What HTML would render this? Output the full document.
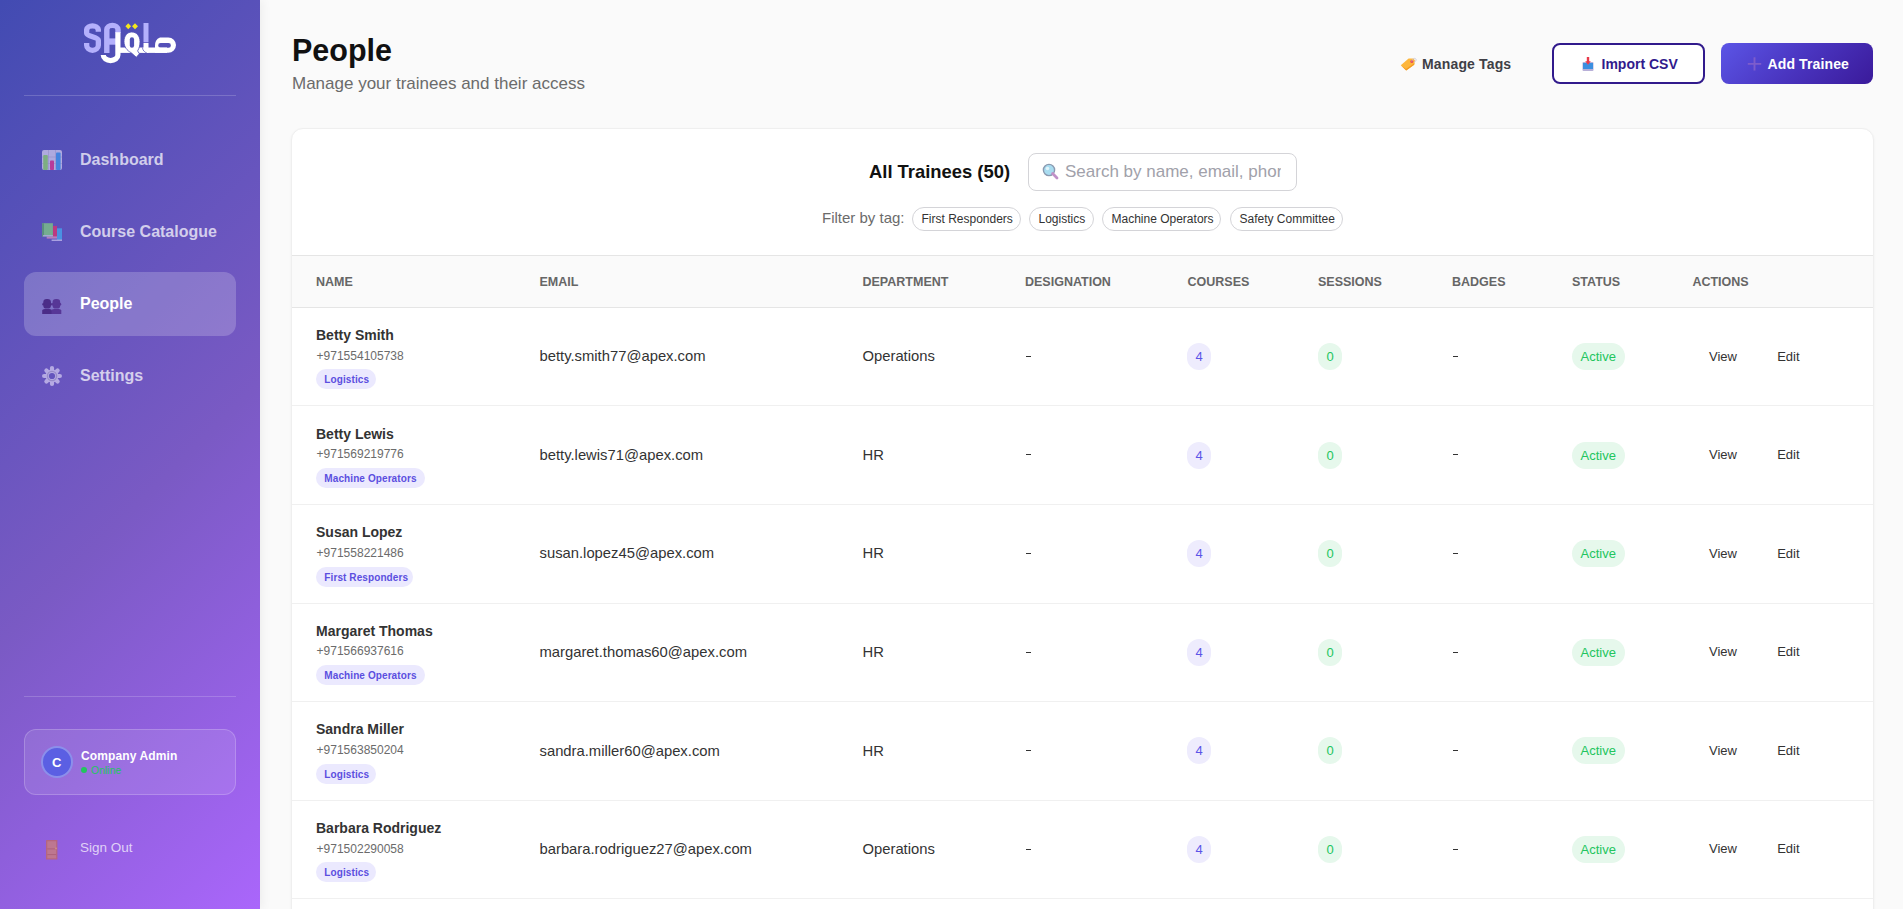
<!DOCTYPE html>
<html><head><meta charset="utf-8"><title>People</title>
<style>
html,body{margin:0;padding:0;}
body{width:1903px;height:909px;overflow:hidden;position:relative;background:#fafafa;font-family:"Liberation Sans",sans-serif;}
.t{position:absolute;white-space:nowrap;}
.r{position:absolute;box-sizing:border-box;}
svg{position:absolute;overflow:visible;}
</style></head><body>
<div class="r" style="left:0;top:0;width:260px;height:909px;background:linear-gradient(135deg,#424bb2 0%,#7a5ac4 55%,#aa66fb 100%);box-shadow:2px 0 10px rgba(0,0,0,0.06);z-index:2"></div>
<div id="sb" style="position:absolute;left:0;top:0;width:260px;height:909px;z-index:3">
<svg style="left:0;top:0" width="260" height="80" viewBox="0 0 260 80">
<path d="M98.3 31.8 V29.6 A5.85 4.15 0 0 0 86.65 29.6 V33.2 C86.65 36.6 98.35 36.9 98.35 40.3 V45.2 A5.85 5.1 0 0 1 86.65 45.2 V43" fill="none" stroke="#b4b0fc" stroke-width="5.3"/>
<path d="M106.8 52.9 V29.6 A5.6 4.2 0 0 1 118 29.6 V33" fill="none" stroke="#b4b0fc" stroke-width="5.4"/>
<rect x="106" y="38.4" width="12" height="6.3" fill="#b4b0fc"/>
<path d="M117.9 32.3 V55 A7.2 5.5 0 0 1 103.3 55" fill="none" stroke="#fff" stroke-width="5.2"/>
<rect x="117" y="47.5" width="50" height="5.4" fill="#fff"/>
<path d="M131.8 32 C136.6 32 140 36 140 41.5 C140 45.2 139.3 48.2 137.6 50.9 L139.4 53.8 L136.3 57.3 L131 52.6 C127 50.6 124 46.8 124 41.5 C124 36 127.2 32 131.8 32 Z" fill="#fff" stroke="#4f4fb5" stroke-width="0.8"/>
<path d="M129.8 39.4 V45.5 A2.15 2.2 0 0 0 134.1 45.5 V39.4 A2.15 2.2 0 0 0 129.8 39.4 Z" fill="#4f50b6"/>
<rect x="143.5" y="23" width="5" height="19.3" fill="#b4b0fc"/>
<rect x="143.5" y="43" width="5" height="9.9" fill="#fff"/>
<path d="M142.4 47.5 C142.8 50.3 144.2 52.2 146.8 52.9" fill="none" stroke="#4f4fb5" stroke-width="0.7"/>
<path d="M160 37.4 H168.3 A7.7 7.7 0 0 1 168.3 52.8 H155 V46 A7.7 8.6 0 0 1 160 37.4 Z M160.6 43 H168.5 A2.4 2.4 0 0 1 168.5 47.8 H160.6 A2.4 2.4 0 0 1 160.6 43 Z" fill="#fff" fill-rule="evenodd"/>
<path d="M128.25 23.2 L131.1 26.15 L128.25 29.2 L125.4 26.15 Z M135 23.2 L138 26.15 L135 29.2 L132 26.15 Z" fill="#f3e61c"/>
</svg>
<div class="r" style="left:24px;top:95px;width:212px;height:1px;background:rgba(255,255,255,0.18)"></div>
<div class="t " style="left:80px;top:149.96px;font-size:16px;line-height:20.0px;color:rgba(255,255,255,0.72);font-weight:700;">Dashboard</div>
<div class="t " style="left:80px;top:221.96px;font-size:16px;line-height:20.0px;color:rgba(255,255,255,0.72);font-weight:700;">Course Catalogue</div>
<div class="r" style="left:24px;top:272px;width:212px;height:64px;background:rgba(255,255,255,0.2);border-radius:12px"></div>
<div class="t " style="left:80px;top:293.96px;font-size:16px;line-height:20.0px;color:#ffffff;font-weight:700;">People</div>
<div class="t " style="left:80px;top:365.96px;font-size:16px;line-height:20.0px;color:rgba(255,255,255,0.72);font-weight:700;">Settings</div>
<svg style="left:42px;top:150px;opacity:0.7" width="20" height="20" viewBox="0 0 20 20">
<rect x="0" y="0" width="20" height="20" rx="2" fill="#d6d0f0"/>
<path d="M6.5 0 V20 M13.5 0 V20 M0 7 H20 M0 13.5 H20" stroke="#b0a8d0" stroke-width="0.6"/>
<rect x="1.2" y="5" width="4.6" height="15" rx="1" fill="#8fd66c"/>
<rect x="8" y="10.5" width="4" height="9.5" rx="0.8" fill="#e0338f"/>
<rect x="14" y="2.5" width="4.6" height="17.5" rx="1" fill="#3f9af0"/>
</svg>
<svg style="left:42px;top:222px;opacity:0.72" width="20" height="20" viewBox="0 0 20 20">
<rect x="15" y="6.3" width="5" height="12.5" fill="#44aaf2"/><rect x="9.6" y="17.5" width="10.4" height="1.5" fill="#c8c0f0"/>
<rect x="10.9" y="3.9" width="4.1" height="11.4" fill="#e0306c"/><rect x="4.7" y="14.4" width="10.3" height="2.2" fill="#d890c0"/>
<rect x="0.1" y="1.2" width="10.8" height="13.2" fill="#80d080"/><rect x="0.1" y="1.2" width="1.9" height="13.2" fill="#5aa66a"/><rect x="1" y="13.2" width="9.9" height="1.2" fill="#d0c8f0"/>
</svg>
<svg style="left:42px;top:298px" width="20" height="17" viewBox="0 0 20 17">
<g fill="#4b2d88">
<rect x="1.3" y="1" width="7.6" height="9.6" rx="3.4" ry="3.2"/><ellipse cx="1.2" cy="6.2" rx="0.9" ry="1.2"/><ellipse cx="9" cy="6.2" rx="0.9" ry="1.2"/>
<path d="M0.2 12.6 Q0.2 11 2.8 10.9 H7.4 Q10 11 10 12.6 V15.9 H0.2 Z"/>
</g>
<g fill="#573797">
<rect x="10.6" y="1" width="7.6" height="9.6" rx="3.4" ry="3.2"/><ellipse cx="10.5" cy="6.2" rx="0.9" ry="1.2"/><ellipse cx="18.3" cy="6.2" rx="0.9" ry="1.2"/>
<path d="M9.5 12.6 Q9.5 11 12.1 10.9 H16.7 Q19.3 11 19.3 12.6 V15.9 H9.5 Z"/>
</g>
</svg>
<svg style="left:42px;top:366px;opacity:0.72" width="20" height="20" viewBox="0 0 20 20">
<g stroke="#d4ccf2" stroke-width="4.2" stroke-linecap="round">
<path d="M10 2.1 V17.9 M2.1 10 H17.9 M4.4 4.4 L15.6 15.6 M15.6 4.4 L4.4 15.6"/></g>
<circle cx="10" cy="10" r="6.4" fill="#d4ccf2"/>
<circle cx="10" cy="10" r="4.6" fill="none" stroke="#aaa0cc" stroke-width="1.3"/>
<circle cx="10" cy="10" r="3.1" fill="#6456bd"/>
</svg>
<div class="r" style="left:24px;top:696px;width:212px;height:1px;background:rgba(255,255,255,0.18)"></div>
<div class="r" style="left:24px;top:729px;width:212px;height:66px;background:rgba(255,255,255,0.1);border:1px solid rgba(255,255,255,0.2);border-radius:12px"></div>
<div class="r" style="left:40.5px;top:746px;width:32px;height:32px;background:#5b5fe3;border:2px solid rgba(255,255,255,0.3);border-radius:50%"></div>
<div class="t " style="left:52.0px;top:754.67px;font-size:13px;line-height:16.25px;color:#fff;font-weight:700;">C</div>
<div class="t " style="left:81px;top:749.14px;font-size:12px;line-height:15.0px;color:#fff;font-weight:700;letter-spacing:0.12px;">Company Admin</div>
<div class="r" style="left:81px;top:767px;width:6px;height:6px;background:#22c55e;border-radius:50%"></div>
<div class="t " style="left:91px;top:764.30px;font-size:10.5px;line-height:13.12px;color:#22c55e;">Online</div>
<svg style="left:46.4px;top:840.3px;opacity:0.62" width="12" height="20" viewBox="0 0 12 20">
<rect x="0" y="0" width="11.4" height="19.5" rx="0.6" fill="#cc6a44"/>
<rect x="1.3" y="1.3" width="8.8" height="17" fill="#d98660"/>
<path d="M1.3 8.9 H10.1 M1.3 14.6 H10.1" stroke="#bb5e3c" stroke-width="0.9"/>
<circle cx="10" cy="8.4" r="0.9" fill="#f5b640"/>
</svg>
<div class="t " style="left:80px;top:840.28px;font-size:13.5px;line-height:16.88px;color:rgba(255,255,255,0.72);">Sign Out</div>
</div>
<div class="t " style="left:292px;top:31.07px;font-size:30.5px;line-height:38.12px;color:#111111;font-weight:700;">People</div>
<div class="t " style="left:292px;top:73.08px;font-size:17px;line-height:21.25px;color:#6b6b6b;">Manage your trainees and their access</div>
<svg style="left:1400px;top:57px" width="17" height="14" viewBox="0 0 17 14">
<path d="M0.8 8.2 L8.6 1.6 L13.4 1.6 L15 3.4 L14.2 7.8 L6.2 13.6 Z" fill="#fdb63c"/>
<path d="M0.8 8.2 L6.2 13.6 L14.2 7.8 L14.5 6 L6 12 Z" fill="#f39a24"/>
<circle cx="11.8" cy="4.4" r="1.5" fill="#e84a5a"/>
<path d="M11.8 4.4 C12.5 1.5 15 0.5 16 2.2 C16.6 3.3 15.5 4.8 14 5" fill="none" stroke="#c4c2d8" stroke-width="0.8"/>
</svg>
<div class="t " style="left:1422px;top:56.10px;font-size:14px;line-height:17.5px;color:#3f3f46;font-weight:700;letter-spacing:0.15px;">Manage Tags</div>
<div class="r" style="left:1552px;top:43px;width:153px;height:41px;border:2px solid #311a8c;border-radius:8px;background:#fff"></div>
<svg style="left:1581.5px;top:57px" width="13" height="14" viewBox="0 0 13 14">
<rect x="0.5" y="5" width="11" height="9" rx="1" fill="#b8b0d8"/>
<path d="M1 6 H5 L6 7.5 L7 6 H11 V12 H1 Z" fill="#3b8fe0"/>
<rect x="4.8" y="0" width="2.4" height="5" fill="#e83a4a"/>
<path d="M3.2 4.2 H8.8 L6 7.8 Z" fill="#e83a4a"/>
</svg>
<div class="t " style="left:1601.5px;top:56.00px;font-size:14px;line-height:17.5px;color:#311a8c;font-weight:700;">Import CSV</div>
<div class="r" style="left:1721px;top:43px;width:152px;height:41px;border-radius:8px;background:linear-gradient(135deg,#5b55e6 0%,#4a35c0 50%,#3a1a9a 100%)"></div>
<svg style="left:1747px;top:56px" width="15" height="15" viewBox="0 0 15 15">
<path d="M7.5 1.2 V14.6 M0.8 7.9 H14.2" stroke="#7d5ccc" stroke-width="1.9"/>
</svg>
<div class="t " style="left:1767.5px;top:56.00px;font-size:14px;line-height:17.5px;color:#ffffff;font-weight:700;letter-spacing:0.12px;">Add Trainee</div>
<div class="r" style="left:291px;top:128px;width:1583px;height:800px;background:#fff;border:1px solid #efefef;border-radius:12px;box-shadow:0 1px 3px rgba(0,0,0,0.05)"></div>
<div class="t " style="left:869px;top:159.52px;font-size:18.4px;line-height:23.0px;color:#111111;font-weight:700;">All Trainees (50)</div>
<div class="r" style="left:1028px;top:153px;width:269px;height:38px;border:1px solid #d4d4d8;border-radius:8px;background:#fff"></div>
<svg style="left:1042px;top:163px" width="18" height="18" viewBox="0 0 18 18">
<circle cx="7" cy="7" r="5.6" fill="#a8dcf0" stroke="#8a9ab0" stroke-width="1.4"/>
<circle cx="5.5" cy="5.5" r="1.8" fill="#e0f4fb"/>
<path d="M10.6 10.6 L15 15" stroke="#c090c8" stroke-width="2.8" stroke-linecap="round"/>
</svg>
<div style="position:absolute;left:1065px;top:156px;width:216px;height:32px;overflow:hidden"><div class="t " style="left:0px;top:5.38px;font-size:17px;line-height:21.25px;color:#a1a1aa;">Search by name, email, phone</div>
</div>
<div class="t " style="left:822px;top:208.73px;font-size:15px;line-height:18.75px;color:#6b6b6b;">Filter by tag:</div>
<div class="r" style="left:912px;top:207px;width:109px;height:24px;border:1px solid #d4d4d8;border-radius:12px;background:#fff"></div>
<div class="t " style="left:921.5px;top:212.14px;font-size:12px;line-height:15.0px;color:#333333;">First Responders</div>
<div class="r" style="left:1029px;top:207px;width:65px;height:24px;border:1px solid #d4d4d8;border-radius:12px;background:#fff"></div>
<div class="t " style="left:1038.5px;top:212.14px;font-size:12px;line-height:15.0px;color:#333333;">Logistics</div>
<div class="r" style="left:1102px;top:207px;width:119px;height:24px;border:1px solid #d4d4d8;border-radius:12px;background:#fff"></div>
<div class="t " style="left:1111.5px;top:212.14px;font-size:12px;line-height:15.0px;color:#333333;">Machine Operators</div>
<div class="r" style="left:1230px;top:207px;width:113px;height:24px;border:1px solid #d4d4d8;border-radius:12px;background:#fff"></div>
<div class="t " style="left:1239.5px;top:212.14px;font-size:12px;line-height:15.0px;color:#333333;">Safety Committee</div>
<div class="r" style="left:292px;top:255px;width:1581px;height:53px;background:#fafafa;border-top:1px solid #e5e5e5;border-bottom:1px solid #e5e5e5"></div>
<div class="t " style="left:316px;top:274.66px;font-size:12.5px;line-height:15.62px;color:#666666;font-weight:700;letter-spacing:0px;">NAME</div>
<div class="t " style="left:539.5px;top:274.66px;font-size:12.5px;line-height:15.62px;color:#666666;font-weight:700;letter-spacing:0px;">EMAIL</div>
<div class="t " style="left:862.5px;top:274.66px;font-size:12.5px;line-height:15.62px;color:#666666;font-weight:700;letter-spacing:0px;">DEPARTMENT</div>
<div class="t " style="left:1025px;top:274.66px;font-size:12.5px;line-height:15.62px;color:#666666;font-weight:700;letter-spacing:0px;">DESIGNATION</div>
<div class="t " style="left:1187.5px;top:274.66px;font-size:12.5px;line-height:15.62px;color:#666666;font-weight:700;letter-spacing:0px;">COURSES</div>
<div class="t " style="left:1318px;top:274.66px;font-size:12.5px;line-height:15.62px;color:#666666;font-weight:700;letter-spacing:0px;">SESSIONS</div>
<div class="t " style="left:1452px;top:274.66px;font-size:12.5px;line-height:15.62px;color:#666666;font-weight:700;letter-spacing:0px;">BADGES</div>
<div class="t " style="left:1572px;top:274.66px;font-size:12.5px;line-height:15.62px;color:#666666;font-weight:700;letter-spacing:0px;">STATUS</div>
<div class="t " style="left:1692.4px;top:274.66px;font-size:12.5px;line-height:15.62px;color:#666666;font-weight:700;letter-spacing:0px;">ACTIONS</div>
<div class="r" style="left:292px;top:405px;width:1581px;height:1px;background:#f0f0f0"></div>
<div class="t " style="left:316px;top:327.00px;font-size:14px;line-height:17.5px;color:#333333;font-weight:700;">Betty Smith</div>
<div class="t " style="left:316.6px;top:348.64px;font-size:12px;line-height:15.0px;color:#6b6b6b;">+971554105738</div>
<div class="r" style="left:316px;top:369px;width:60px;height:20px;background:#ebe9fe;border-radius:10px"></div>
<div class="t " style="left:324.3px;top:374.09px;font-size:10px;line-height:12.5px;color:#5b4fe0;font-weight:700;letter-spacing:0.1px;">Logistics</div>
<div class="t " style="left:539.5px;top:347.12px;font-size:14.8px;line-height:18.5px;color:#333333;">betty.smith77@apex.com</div>
<div class="t " style="left:862.5px;top:347.12px;font-size:14.8px;line-height:18.5px;color:#333333;">Operations</div>
<div class="r" style="left:1025.6px;top:356px;width:5.2px;height:1px;background:#333"></div>
<div class="r" style="left:1187px;top:343px;width:24px;height:27px;background:#eeecfd;border-radius:12px"></div>
<div class="t " style="left:1195.5px;top:348.97px;font-size:13px;line-height:16.25px;color:#5b54e8;">4</div>
<div class="r" style="left:1318px;top:343px;width:24px;height:27px;background:#e6f8ec;border-radius:12px"></div>
<div class="t " style="left:1326.5px;top:348.97px;font-size:13px;line-height:16.25px;color:#22c55e;">0</div>
<div class="r" style="left:1452.7px;top:356px;width:5.2px;height:1px;background:#333"></div>
<div class="r" style="left:1572px;top:343px;width:53px;height:27px;background:#e6f8ec;border-radius:13.5px"></div>
<div class="t " style="left:1580.5px;top:348.97px;font-size:13px;line-height:16.25px;color:#22c55e;">Active</div>
<div class="t " style="left:1709px;top:349.17px;font-size:13px;line-height:16.25px;color:#333333;">View</div>
<div class="t " style="left:1777.2px;top:349.17px;font-size:13px;line-height:16.25px;color:#333333;">Edit</div>
<div class="r" style="left:292px;top:504px;width:1581px;height:1px;background:#f0f0f0"></div>
<div class="t " style="left:316px;top:425.60px;font-size:14px;line-height:17.5px;color:#333333;font-weight:700;">Betty Lewis</div>
<div class="t " style="left:316.6px;top:447.24px;font-size:12px;line-height:15.0px;color:#6b6b6b;">+971569219776</div>
<div class="r" style="left:316px;top:468px;width:108.5px;height:20px;background:#ebe9fe;border-radius:10px"></div>
<div class="t " style="left:324.3px;top:473.09px;font-size:10px;line-height:12.5px;color:#5b4fe0;font-weight:700;letter-spacing:0.1px;">Machine Operators</div>
<div class="t " style="left:539.5px;top:445.72px;font-size:14.8px;line-height:18.5px;color:#333333;">betty.lewis71@apex.com</div>
<div class="t " style="left:862.5px;top:445.72px;font-size:14.8px;line-height:18.5px;color:#333333;">HR</div>
<div class="r" style="left:1025.6px;top:454px;width:5.2px;height:1px;background:#333"></div>
<div class="r" style="left:1187px;top:442px;width:24px;height:27px;background:#eeecfd;border-radius:12px"></div>
<div class="t " style="left:1195.5px;top:447.57px;font-size:13px;line-height:16.25px;color:#5b54e8;">4</div>
<div class="r" style="left:1318px;top:442px;width:24px;height:27px;background:#e6f8ec;border-radius:12px"></div>
<div class="t " style="left:1326.5px;top:447.57px;font-size:13px;line-height:16.25px;color:#22c55e;">0</div>
<div class="r" style="left:1452.7px;top:454px;width:5.2px;height:1px;background:#333"></div>
<div class="r" style="left:1572px;top:442px;width:53px;height:27px;background:#e6f8ec;border-radius:13.5px"></div>
<div class="t " style="left:1580.5px;top:447.57px;font-size:13px;line-height:16.25px;color:#22c55e;">Active</div>
<div class="t " style="left:1709px;top:447.17px;font-size:13px;line-height:16.25px;color:#333333;">View</div>
<div class="t " style="left:1777.2px;top:447.17px;font-size:13px;line-height:16.25px;color:#333333;">Edit</div>
<div class="r" style="left:292px;top:603px;width:1581px;height:1px;background:#f0f0f0"></div>
<div class="t " style="left:316px;top:524.20px;font-size:14px;line-height:17.5px;color:#333333;font-weight:700;">Susan Lopez</div>
<div class="t " style="left:316.6px;top:545.84px;font-size:12px;line-height:15.0px;color:#6b6b6b;">+971558221486</div>
<div class="r" style="left:316px;top:567px;width:97px;height:20px;background:#ebe9fe;border-radius:10px"></div>
<div class="t " style="left:324.3px;top:572.08px;font-size:10px;line-height:12.5px;color:#5b4fe0;font-weight:700;letter-spacing:0.1px;">First Responders</div>
<div class="t " style="left:539.5px;top:544.32px;font-size:14.8px;line-height:18.5px;color:#333333;">susan.lopez45@apex.com</div>
<div class="t " style="left:862.5px;top:544.32px;font-size:14.8px;line-height:18.5px;color:#333333;">HR</div>
<div class="r" style="left:1025.6px;top:553px;width:5.2px;height:1px;background:#333"></div>
<div class="r" style="left:1187px;top:540px;width:24px;height:27px;background:#eeecfd;border-radius:12px"></div>
<div class="t " style="left:1195.5px;top:546.17px;font-size:13px;line-height:16.25px;color:#5b54e8;">4</div>
<div class="r" style="left:1318px;top:540px;width:24px;height:27px;background:#e6f8ec;border-radius:12px"></div>
<div class="t " style="left:1326.5px;top:546.17px;font-size:13px;line-height:16.25px;color:#22c55e;">0</div>
<div class="r" style="left:1452.7px;top:553px;width:5.2px;height:1px;background:#333"></div>
<div class="r" style="left:1572px;top:540px;width:53px;height:27px;background:#e6f8ec;border-radius:13.5px"></div>
<div class="t " style="left:1580.5px;top:546.17px;font-size:13px;line-height:16.25px;color:#22c55e;">Active</div>
<div class="t " style="left:1709px;top:546.17px;font-size:13px;line-height:16.25px;color:#333333;">View</div>
<div class="t " style="left:1777.2px;top:546.17px;font-size:13px;line-height:16.25px;color:#333333;">Edit</div>
<div class="r" style="left:292px;top:701px;width:1581px;height:1px;background:#f0f0f0"></div>
<div class="t " style="left:316px;top:622.80px;font-size:14px;line-height:17.5px;color:#333333;font-weight:700;">Margaret Thomas</div>
<div class="t " style="left:316.6px;top:644.44px;font-size:12px;line-height:15.0px;color:#6b6b6b;">+971566937616</div>
<div class="r" style="left:316px;top:665px;width:108.5px;height:20px;background:#ebe9fe;border-radius:10px"></div>
<div class="t " style="left:324.3px;top:670.08px;font-size:10px;line-height:12.5px;color:#5b4fe0;font-weight:700;letter-spacing:0.1px;">Machine Operators</div>
<div class="t " style="left:539.5px;top:642.92px;font-size:14.8px;line-height:18.5px;color:#333333;">margaret.thomas60@apex.com</div>
<div class="t " style="left:862.5px;top:642.92px;font-size:14.8px;line-height:18.5px;color:#333333;">HR</div>
<div class="r" style="left:1025.6px;top:652px;width:5.2px;height:1px;background:#333"></div>
<div class="r" style="left:1187px;top:639px;width:24px;height:27px;background:#eeecfd;border-radius:12px"></div>
<div class="t " style="left:1195.5px;top:644.77px;font-size:13px;line-height:16.25px;color:#5b54e8;">4</div>
<div class="r" style="left:1318px;top:639px;width:24px;height:27px;background:#e6f8ec;border-radius:12px"></div>
<div class="t " style="left:1326.5px;top:644.77px;font-size:13px;line-height:16.25px;color:#22c55e;">0</div>
<div class="r" style="left:1452.7px;top:652px;width:5.2px;height:1px;background:#333"></div>
<div class="r" style="left:1572px;top:639px;width:53px;height:27px;background:#e6f8ec;border-radius:13.5px"></div>
<div class="t " style="left:1580.5px;top:644.77px;font-size:13px;line-height:16.25px;color:#22c55e;">Active</div>
<div class="t " style="left:1709px;top:644.17px;font-size:13px;line-height:16.25px;color:#333333;">View</div>
<div class="t " style="left:1777.2px;top:644.17px;font-size:13px;line-height:16.25px;color:#333333;">Edit</div>
<div class="r" style="left:292px;top:800px;width:1581px;height:1px;background:#f0f0f0"></div>
<div class="t " style="left:316px;top:721.40px;font-size:14px;line-height:17.5px;color:#333333;font-weight:700;">Sandra Miller</div>
<div class="t " style="left:316.6px;top:743.04px;font-size:12px;line-height:15.0px;color:#6b6b6b;">+971563850204</div>
<div class="r" style="left:316px;top:764px;width:60px;height:20px;background:#ebe9fe;border-radius:10px"></div>
<div class="t " style="left:324.3px;top:769.08px;font-size:10px;line-height:12.5px;color:#5b4fe0;font-weight:700;letter-spacing:0.1px;">Logistics</div>
<div class="t " style="left:539.5px;top:741.52px;font-size:14.8px;line-height:18.5px;color:#333333;">sandra.miller60@apex.com</div>
<div class="t " style="left:862.5px;top:741.52px;font-size:14.8px;line-height:18.5px;color:#333333;">HR</div>
<div class="r" style="left:1025.6px;top:750px;width:5.2px;height:1px;background:#333"></div>
<div class="r" style="left:1187px;top:737px;width:24px;height:27px;background:#eeecfd;border-radius:12px"></div>
<div class="t " style="left:1195.5px;top:743.37px;font-size:13px;line-height:16.25px;color:#5b54e8;">4</div>
<div class="r" style="left:1318px;top:737px;width:24px;height:27px;background:#e6f8ec;border-radius:12px"></div>
<div class="t " style="left:1326.5px;top:743.37px;font-size:13px;line-height:16.25px;color:#22c55e;">0</div>
<div class="r" style="left:1452.7px;top:750px;width:5.2px;height:1px;background:#333"></div>
<div class="r" style="left:1572px;top:737px;width:53px;height:27px;background:#e6f8ec;border-radius:13.5px"></div>
<div class="t " style="left:1580.5px;top:743.37px;font-size:13px;line-height:16.25px;color:#22c55e;">Active</div>
<div class="t " style="left:1709px;top:743.17px;font-size:13px;line-height:16.25px;color:#333333;">View</div>
<div class="t " style="left:1777.2px;top:743.17px;font-size:13px;line-height:16.25px;color:#333333;">Edit</div>
<div class="r" style="left:292px;top:898px;width:1581px;height:1px;background:#f0f0f0"></div>
<div class="t " style="left:316px;top:820.00px;font-size:14px;line-height:17.5px;color:#333333;font-weight:700;">Barbara Rodriguez</div>
<div class="t " style="left:316.6px;top:841.64px;font-size:12px;line-height:15.0px;color:#6b6b6b;">+971502290058</div>
<div class="r" style="left:316px;top:862px;width:60px;height:20px;background:#ebe9fe;border-radius:10px"></div>
<div class="t " style="left:324.3px;top:867.08px;font-size:10px;line-height:12.5px;color:#5b4fe0;font-weight:700;letter-spacing:0.1px;">Logistics</div>
<div class="t " style="left:539.5px;top:840.12px;font-size:14.8px;line-height:18.5px;color:#333333;">barbara.rodriguez27@apex.com</div>
<div class="t " style="left:862.5px;top:840.12px;font-size:14.8px;line-height:18.5px;color:#333333;">Operations</div>
<div class="r" style="left:1025.6px;top:849px;width:5.2px;height:1px;background:#333"></div>
<div class="r" style="left:1187px;top:836px;width:24px;height:27px;background:#eeecfd;border-radius:12px"></div>
<div class="t " style="left:1195.5px;top:841.97px;font-size:13px;line-height:16.25px;color:#5b54e8;">4</div>
<div class="r" style="left:1318px;top:836px;width:24px;height:27px;background:#e6f8ec;border-radius:12px"></div>
<div class="t " style="left:1326.5px;top:841.97px;font-size:13px;line-height:16.25px;color:#22c55e;">0</div>
<div class="r" style="left:1452.7px;top:849px;width:5.2px;height:1px;background:#333"></div>
<div class="r" style="left:1572px;top:836px;width:53px;height:27px;background:#e6f8ec;border-radius:13.5px"></div>
<div class="t " style="left:1580.5px;top:841.97px;font-size:13px;line-height:16.25px;color:#22c55e;">Active</div>
<div class="t " style="left:1709px;top:841.17px;font-size:13px;line-height:16.25px;color:#333333;">View</div>
<div class="t " style="left:1777.2px;top:841.17px;font-size:13px;line-height:16.25px;color:#333333;">Edit</div>
</body></html>
